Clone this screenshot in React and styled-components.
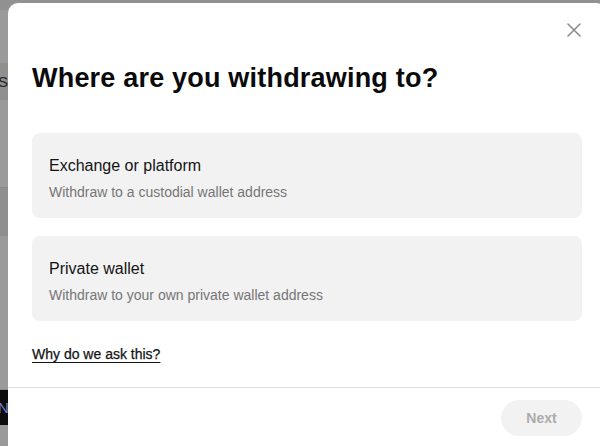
import React from "react";
import styled, { createGlobalStyle } from "styled-components";

const Global = createGlobalStyle`
  html, body { margin: 0; padding: 0; }
  body { font-family: "Liberation Sans", Arial, sans-serif; overflow: hidden; background: #9a9a9a; }
  * { box-sizing: border-box; }
`;

const Screen = styled.div`
  position: relative;
  width: 600px;
  height: 446px;
  overflow: hidden;
  background: #9a9a9a;
`;

const Backdrop = styled.div`
  display: flex;
  flex-direction: column;
  height: 100%;
`;

const Band = styled.div`
  height: ${(p) => p.$h}px;
  flex: none;
  background: ${(p) => p.$bg || "#9a9a9a"};
  border-bottom: ${(p) => (p.$line ? "1px solid #8a8a8a" : "none")};
  display: flex;
  align-items: center;
  color: ${(p) => p.$fg || "#222"};
  white-space: nowrap;
  overflow: hidden;
`;

const BandText = styled.span`
  font-size: 15px;
  margin-left: -2px;
`;

const Modal = styled.div`
  position: absolute;
  left: 8px;
  top: 3px;
  width: 598px;
  height: 460px;
  background: #fff;
  border-radius: 10px;
  display: flex;
  flex-direction: column;
`;

const Header = styled.div`
  height: 59px;
  display: flex;
  justify-content: flex-end;
  align-items: flex-start;
  padding: 15px 20px 0 0;
`;

const CloseButton = styled.button`
  width: 24px;
  height: 24px;
  border: none;
  background: none;
  padding: 0;
  display: flex;
  align-items: center;
  justify-content: center;
  color: #8a8a8a;
  cursor: pointer;
`;

const Body = styled.div`
  padding: 0 24px;
  display: flex;
  flex-direction: column;
`;

const Title = styled.h1`
  margin: 0;
  font-size: 27px;
  line-height: 32px;
  font-weight: 700;
  letter-spacing: 0.2px;
  color: #0a0a0a;
`;

const Options = styled.div`
  margin-top: 39px;
  display: flex;
  flex-direction: column;
  gap: 18px;
`;

const Option = styled.button`
  height: 85px;
  border: none;
  border-radius: 8px;
  background: #f2f2f2;
  padding: 21px 17px 0;
  display: flex;
  flex-direction: column;
  justify-content: flex-start;
  align-items: flex-start;
  text-align: left;
  font-family: inherit;
  cursor: pointer;
`;

const OptionTitle = styled.span`
  font-size: 16px;
  line-height: 24px;
  color: #141414;
  font-weight: 400;
`;

const OptionSub = styled.span`
  margin-top: 4px;
  font-size: 14px;
  line-height: 20px;
  color: #767676;
`;

const HelpLink = styled.a`
  margin-top: 23px;
  align-self: flex-start;
  font-size: 14px;
  line-height: 20px;
  font-weight: 400;
  color: #141414;
  text-decoration: underline;
  text-underline-offset: 3px;
  text-decoration-thickness: 1px;
  -webkit-text-stroke: 0.25px #141414;
`;

const Footer = styled.div`
  margin-top: 23px;
  border-top: 1px solid #dddddd;
  padding: 12px 24px 0;
  display: flex;
  justify-content: flex-end;
`;

const NextButton = styled.button`
  width: 81px;
  height: 36px;
  border: none;
  border-radius: 18px;
  background: #f2f2f2;
  color: #ababab;
  font-family: inherit;
  font-size: 14px;
  font-weight: 700;
`;

export default function App() {
  return (
    <>
      <Global />
      <Screen>
        <Backdrop>
          <Band $h={10} $bg="#919191" />
          <Band $h={53} />
          <Band $h={37} $bg="#8f8f8f">
            <BandText>Sl</BandText>
          </Band>
          <Band $h={88} $line />
          <Band $h={48} $bg="#8f8f8f" />
          <Band $h={54} />
          <Band $h={100} $line />
          <Band $h={35} $bg="#0d0d0d" $fg="#6f7fd8">
            <BandText>N</BandText>
          </Band>
          <Band $h={21} />
        </Backdrop>
        <Modal role="dialog">
          <Header>
            <CloseButton aria-label="Close">
              <svg width="14" height="14" viewBox="0 0 14 14" fill="none" stroke="currentColor" strokeWidth="1.5" strokeLinecap="round">
                <path d="M1 1L13 13M13 1L1 13" />
              </svg>
            </CloseButton>
          </Header>
          <Body>
            <Title>Where are you withdrawing to?</Title>
            <Options>
              <Option>
                <OptionTitle>Exchange or platform</OptionTitle>
                <OptionSub>Withdraw to a custodial wallet address</OptionSub>
              </Option>
              <Option>
                <OptionTitle>Private wallet</OptionTitle>
                <OptionSub>Withdraw to your own private wallet address</OptionSub>
              </Option>
            </Options>
            <HelpLink href="#">Why do we ask this?</HelpLink>
          </Body>
          <Footer>
            <NextButton disabled>Next</NextButton>
          </Footer>
        </Modal>
      </Screen>
    </>
  );
}
